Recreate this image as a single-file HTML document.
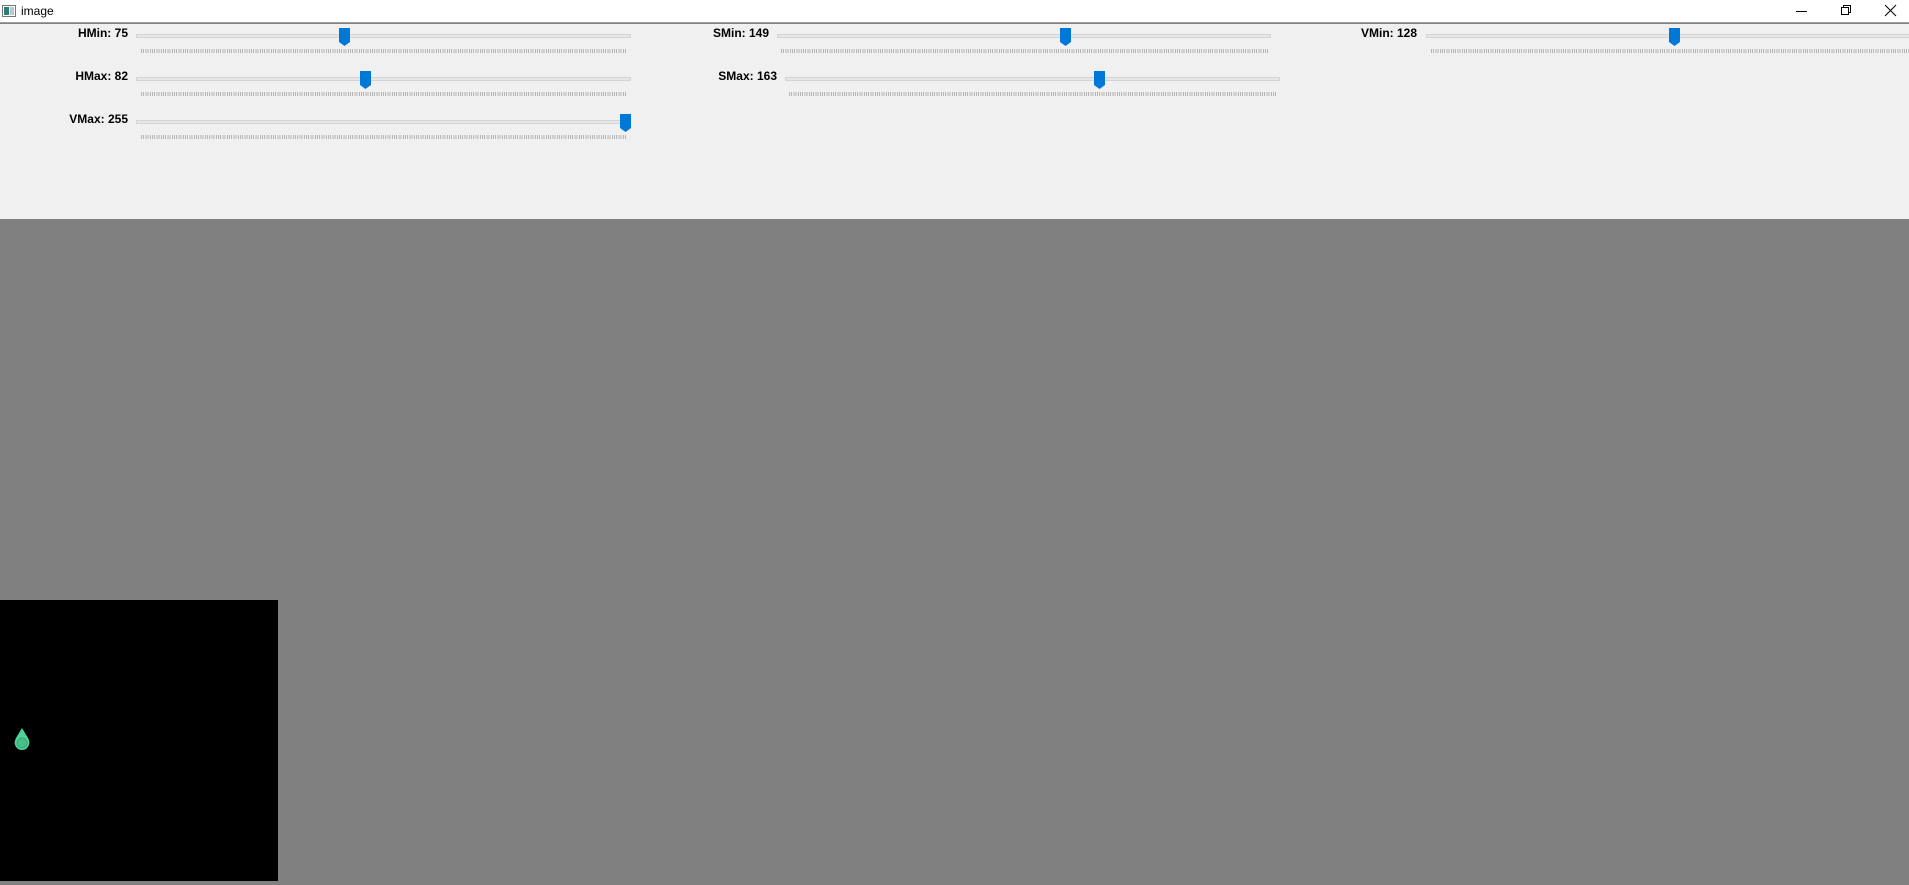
<!DOCTYPE html>
<html><head><meta charset="utf-8"><style>
*{margin:0;padding:0;box-sizing:border-box}
body{width:1909px;height:885px;overflow:hidden;background:#808080;position:relative;font-family:"Liberation Sans",sans-serif}
#title{position:absolute;left:0;top:0;width:1909px;height:23px;background:#fff;border-bottom:1px solid #a0a0a0}
#title .t{position:absolute;left:21px;top:4px;font-size:12px;color:#000}
#panel{position:absolute;left:0;top:24px;width:1909px;height:195px;background:#f0f0f0}
.lbl{position:absolute;font-size:12px;font-weight:bold;color:#000;text-align:right;width:120px}
.trk{position:absolute;height:4px;background:#e6e6e6;border:1px solid #d4d4d4}
.tk{position:absolute;height:4px;background:repeating-linear-gradient(90deg,#b4b4b4 0 1px,transparent 1px 2.2px)}
.th{position:absolute;width:11px;height:18px}
</style></head><body>
<div id="title">
<svg style="position:absolute;left:2px;top:5px" width="14" height="12"><rect x="0.5" y="0.5" width="13" height="11" fill="#fff" stroke="#777"/><rect x="2" y="2" width="5" height="8" fill="#2e7d7a"/><rect x="8" y="2" width="4" height="8" fill="#b8c8d0"/></svg>
<span class="t">image</span>
<svg style="position:absolute;left:1795px;top:5px" width="14" height="14"><line x1="1" y1="6.5" x2="12" y2="6.5" stroke="#000"/></svg>
<svg style="position:absolute;left:1840px;top:4px" width="14" height="14"><rect x="1.5" y="3.5" width="7" height="7" fill="none" stroke="#000"/><path d="M3.5 3.5V1.5H10.5V8.5H8.5" fill="none" stroke="#000"/></svg>
<svg style="position:absolute;left:1884px;top:4px" width="14" height="14"><path d="M1 1L12 12M12 1L1 12" stroke="#000"/></svg>
</div>
<div id="panel"></div>

<!-- row 1 -->
<div class="lbl" style="left:8px;top:26px">HMin: 75</div>
<div class="trk" style="left:136px;top:34px;width:495px"></div>
<div class="tk" style="left:141px;top:49px;width:485px"></div>
<svg class="th" style="left:339px;top:28px" viewBox="0 0 11 18"><path d="M0 0H11V14L5.5 18L0 14Z" fill="#0078d7"/></svg>

<div class="lbl" style="left:649px;top:26px">SMin: 149</div>
<div class="trk" style="left:777px;top:34px;width:494px"></div>
<div class="tk" style="left:781px;top:49px;width:487px"></div>
<svg class="th" style="left:1060px;top:28px" viewBox="0 0 11 18"><path d="M0 0H11V14L5.5 18L0 14Z" fill="#0078d7"/></svg>

<div class="lbl" style="left:1297px;top:26px">VMin: 128</div>
<div class="trk" style="left:1426px;top:34px;width:500px"></div>
<div class="tk" style="left:1431px;top:49px;width:490px"></div>
<svg class="th" style="left:1669px;top:28px" viewBox="0 0 11 18"><path d="M0 0H11V14L5.5 18L0 14Z" fill="#0078d7"/></svg>

<!-- row 2 -->
<div class="lbl" style="left:8px;top:69px">HMax: 82</div>
<div class="trk" style="left:136px;top:77px;width:495px"></div>
<div class="tk" style="left:141px;top:92px;width:485px"></div>
<svg class="th" style="left:360px;top:71px" viewBox="0 0 11 18"><path d="M0 0H11V14L5.5 18L0 14Z" fill="#0078d7"/></svg>

<div class="lbl" style="left:657px;top:69px">SMax: 163</div>
<div class="trk" style="left:785px;top:77px;width:495px"></div>
<div class="tk" style="left:789px;top:92px;width:487px"></div>
<svg class="th" style="left:1094px;top:71px" viewBox="0 0 11 18"><path d="M0 0H11V14L5.5 18L0 14Z" fill="#0078d7"/></svg>

<!-- row 3 -->
<div class="lbl" style="left:8px;top:112px">VMax: 255</div>
<div class="trk" style="left:136px;top:120px;width:495px"></div>
<div class="tk" style="left:141px;top:135px;width:485px"></div>
<svg class="th" style="left:620px;top:114px" viewBox="0 0 11 18"><path d="M0 0H11V14L5.5 18L0 14Z" fill="#0078d7"/></svg>

<div style="position:absolute;left:0;top:600px;width:278px;height:281px;background:#000"></div>
<svg style="position:absolute;left:12px;top:727px" width="20" height="25" viewBox="0 0 20 25"><path d="M10 1L16 11Q18 15 17 18Q15 23 10 23Q5 23 3 18Q2 15 4 11Z" fill="#4fd39a"/><circle cx="10" cy="16" r="5" fill="#45c08c" stroke="#3aa879" stroke-width="1"/></svg>
</body></html>
